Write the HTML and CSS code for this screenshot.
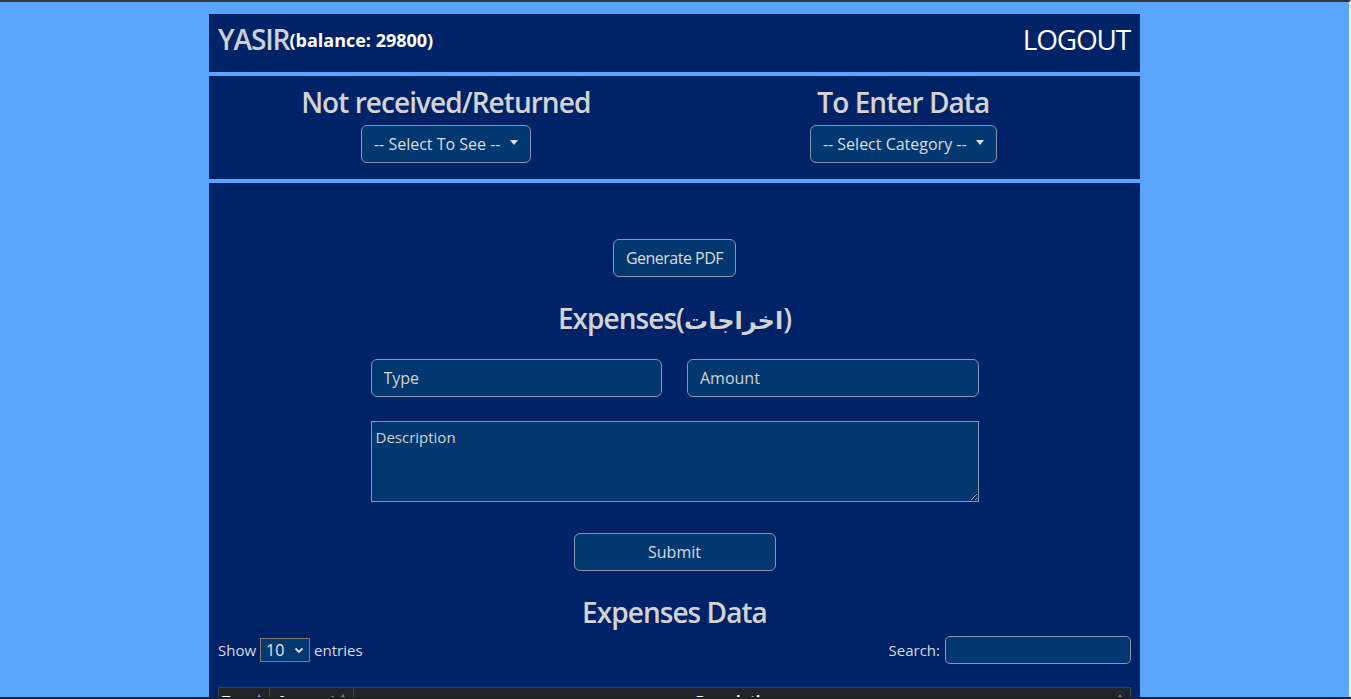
FILE: index.html
```html
<!DOCTYPE html>
<html lang="en">
<head>
<meta charset="utf-8">
<title>Expenses</title>
<link rel="stylesheet" href="styles.css">
</head>
<body>
<div class="page">
  <header class="topbar">
    <div class="brand">
      <span class="name">YASIR</span><span class="balance">(balance: 29800)</span>
    </div>
    <a class="logout" href="#">LOGOUT</a>
  </header>

  <section class="pickers">
    <div class="picker">
      <h3 class="picker-title">Not received/Returned</h3>
      <button class="dd" type="button">-- Select To See --<span class="caret"></span></button>
    </div>
    <div class="picker">
      <h3 class="picker-title">To Enter Data</h3>
      <button class="dd" type="button">-- Select Category --<span class="caret"></span></button>
    </div>
  </section>

  <main class="content">
    <div class="center-row">
      <button class="btn btn-pdf" type="button">Generate PDF</button>
    </div>
    <h3 class="title title-form">Expenses(<span class="ar">اخراجات</span>)</h3>
    <form class="form">
      <div class="form-row">
        <input class="field" type="text" placeholder="Type">
        <input class="field" type="text" placeholder="Amount">
      </div>
      <textarea class="area" placeholder="Description"></textarea>
      <div class="center-row">
        <button class="btn btn-submit" type="button">Submit</button>
      </div>
    </form>
    <h3 class="title title-data">Expenses Data</h3>
    <div class="dt-controls">
      <label class="dt-length">Show
        <span class="select-wrap">
          <select class="dt-select"><option>10</option><option>25</option><option>50</option></select>
          <svg class="chev" width="10" height="7" viewBox="0 0 10 7"><path d="M1.5 1.5 L5 5 L8.5 1.5" fill="none" stroke="#e0e0e0" stroke-width="1.8"/></svg>
        </span>
        entries</label>
      <label class="dt-search">Search: <input class="search" type="search"></label>
    </div>
    <table class="dt">
      <colgroup>
        <col class="col-type">
        <col class="col-amount">
        <col>
      </colgroup>
      <thead>
        <tr>
          <th class="sorted">Type</th>
          <th>Amount</th>
          <th>Description</th>
        </tr>
      </thead>
      <tbody>
        <tr><td>Fuel</td><td>200</td><td>Car fuel</td></tr>
      </tbody>
    </table>
  </main>
</div>
<div class="bottom-strip"></div>
</body>
</html>
```
FILE: styles.css
```css
* { box-sizing: border-box; }

html {
  background: #5aa6ff;
  border-top: 2px solid #343538;
  border-right: 2px solid #f1f1f1;
}

body {
  margin: 0;
  font-family: "Open Sans", "DejaVu Sans", sans-serif;
  color: #d3d3d3;
}

.page {
  width: 931px;
  margin: 12px auto 0;
}

/* top bar */
.topbar {
  display: flex;
  justify-content: space-between;
  align-items: center;
  background: #002266;
  height: 58px;
  padding: 0 10px 6px 9px;
}

.brand {
  display: flex;
  align-items: center;
}

.name {
  font-size: 28px;
  line-height: 1.2;
  font-weight: 600;
  letter-spacing: -1.1px;
  color: #cdd0d5;
}

.balance {
  font-size: 18px;
  font-weight: 700;
  color: #ffffff;
  line-height: 1.2;
  margin-top: 1px;
}

.logout {
  font-size: 28px;
  line-height: 1.2;
  font-weight: 500;
  letter-spacing: -1.2px;
  color: #ffffff;
  text-decoration: none;
}

/* pickers */
.pickers {
  margin-top: 4px;
  background: #002266;
  display: grid;
  grid-template-columns: 1fr 1fr;
  padding: 10px 8px 16px;
}

.picker {
  display: flex;
  flex-direction: column;
  align-items: center;
}

.picker-title,
.title {
  margin: 0;
  font-size: 28px;
  line-height: 1.2;
  font-weight: 600;
  letter-spacing: -0.95px;
  color: #d3d3d3;
}

.picker-title { margin-bottom: 5px; }

.dd,
.btn {
  font-family: inherit;
  font-size: 16px;
  line-height: 24px;
  color: #dcdcdc;
  background: #03376f;
  border: 1px solid #8797b4;
  border-radius: 6px;
  padding: 6px 12px;
}

.btn-pdf {
  letter-spacing: -0.5px;
}

.dd {
  display: inline-flex;
  align-items: center;
}

.caret {
  display: inline-block;
  margin-left: 9px;
  width: 0;
  height: 0;
  border-top: 5px solid #e0e0e0;
  border-left: 4.5px solid transparent;
  border-right: 4.5px solid transparent;
  margin-top: -2px;
}

/* main content */
.content {
  margin-top: 4px;
  background: #002266;
  padding: 56px 9px 0;
  min-height: 520px;
}

.center-row {
  display: flex;
  justify-content: center;
}

.title {
  text-align: center;
}

.title-form {
  margin: 25px 0 24px;
}

.ar {
  font-size: 24px;
  letter-spacing: 0;
}

.form {
  width: 608px;
  margin: 0 auto;
}

.form-row {
  display: grid;
  grid-template-columns: 1fr 1fr;
  gap: 25px;
}

.field {
  font-family: inherit;
  font-size: 16px;
  height: 38px;
  padding: 6px 12px;
  background: #03376f;
  color: #e0e0e0;
  border: 1px solid #8797b4;
  border-radius: 6px;
  width: 100%;
}

.field::placeholder,
.area::placeholder {
  color: #d3d3d3;
  opacity: 1;
}

.area {
  display: block;
  width: 100%;
  height: 81px;
  margin-top: 24px;
  font-family: inherit;
  font-size: 15px;
  line-height: 1.3;
  padding: 6px 4px;
  background: #03376f;
  color: #e0e0e0;
  border: 1px solid #8797b4;
  border-radius: 0;
}

.btn-submit {
  margin-top: 31px;
  width: 202px;
}

.title-data {
  margin: 25px 0 6px;
}

/* datatable controls */
.dt-controls {
  display: flex;
  justify-content: space-between;
  align-items: center;
  height: 28px;
  font-size: 15px;
  color: #d8dbe0;
}

.dt-length {
  display: flex;
  align-items: center;
  gap: 4px;
}

.select-wrap {
  position: relative;
  display: inline-block;
}

.dt-select {
  appearance: none;
  -webkit-appearance: none;
  width: 50px;
  height: 24px;
  font-family: inherit;
  font-size: 16px;
  padding: 0 0 0 5px;
  background: #03376f;
  color: #e6e6e6;
  border: 1px solid #7f7c72;
  border-radius: 0;
}

.chev {
  position: absolute;
  right: 6px;
  top: 9px;
  pointer-events: none;
}

.dt-search {
  display: flex;
  align-items: center;
  gap: 5px;
}

.search {
  width: 186px;
  height: 28px;
  background: #03376f;
  border: 1px solid #8797b4;
  border-radius: 5px;
  color: #e0e0e0;
}

/* table */
.dt {
  width: 100%;
  table-layout: fixed;
  margin-top: 23px;
  border-collapse: collapse;
  background: #212529;
  color: #ffffff;
  font-size: 15px;
  border: 1px solid #3c3f44;
}

.col-type { width: 51px; }
.col-amount { width: 84px; }

.dt th {
  position: relative;
  padding: 2px 12px 8px 2px;
  text-align: center;
  font-weight: 700;
  letter-spacing: -0.3px;
  white-space: nowrap;
  overflow: hidden;
  border-right: 1px solid #45484e;
  border-bottom: 1px solid #45484e;
}

.dt th::after {
  content: "";
  position: absolute;
  right: 7px;
  top: 6px;
  width: 0;
  height: 0;
  border-bottom: 5px solid rgba(255, 255, 255, 0.45);
  border-left: 3px solid transparent;
  border-right: 3px solid transparent;
}

.dt th.sorted::after {
  border-bottom-color: #7b7fe0;
}

.dt td {
  padding: 8px;
  border-right: 1px solid #45484e;
}

.bottom-strip {
  position: fixed;
  left: 0;
  right: 0;
  bottom: 0;
  height: 2px;
  background: #202124;
}
```
